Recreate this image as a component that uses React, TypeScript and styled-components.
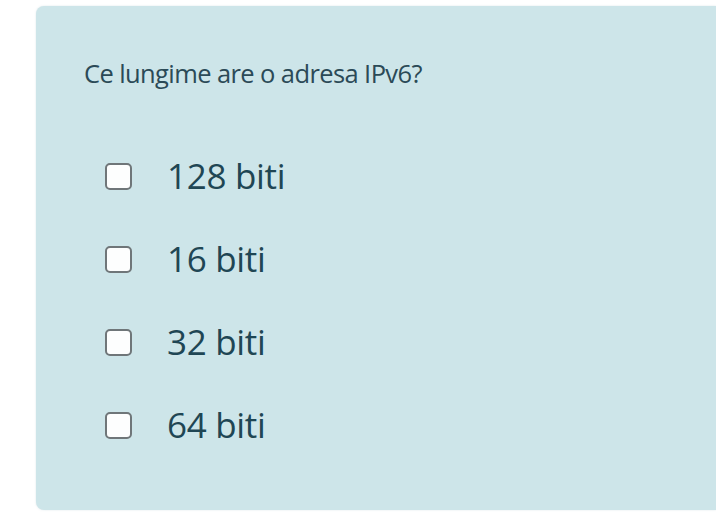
import React from "react";
import styled, { createGlobalStyle } from "styled-components";

const Global = createGlobalStyle`
  html, body { margin: 0; padding: 0; background: #ffffff; }
  body { font-family: "Open Sans", "Noto Sans", sans-serif; }
`;

const Page = styled.div`
  width: 716px;
  height: 531px;
  padding: 6px 0 21px 36px;
  box-sizing: border-box;
  display: flex;
`;

const Card = styled.div`
  flex: 1;
  background: #cde5e9;
  border-radius: 8px 0 0 8px;
  box-shadow: 0 0 2px rgba(120, 160, 170, 0.25);
  padding: 44px 0 0 48px;
  box-sizing: border-box;
`;

const Question = styled.div`
  font-size: 25.5px;
  letter-spacing: -0.6px;
  line-height: 46px;
  color: #2b4a57;
  margin-bottom: 57px;
`;

const Options = styled.div`
  display: flex;
  flex-direction: column;
  gap: 37px;
  padding-left: 21px;
`;

const Option = styled.label`
  display: flex;
  align-items: center;
  gap: 35px;
  font-size: 35px;
  letter-spacing: -0.3px;
  line-height: 46px;
  color: #1f4654;
`;

const Box = styled.span`
  width: 27px;
  height: 27px;
  box-sizing: border-box;
  background: #fdfefe;
  border: 2px solid #6f7679;
  border-radius: 5px;
  flex: none;
`;

const answers = ["128 biti", "16 biti", "32 biti", "64 biti"];

export default function App() {
  return (
    <>
      <Global />
      <Page>
        <Card>
          <Question>Ce lungime are o adresa IPv6?</Question>
          <Options>
            {answers.map((a) => (
              <Option key={a}>
                <Box />
                <span>{a}</span>
              </Option>
            ))}
          </Options>
        </Card>
      </Page>
    </>
  );
}
